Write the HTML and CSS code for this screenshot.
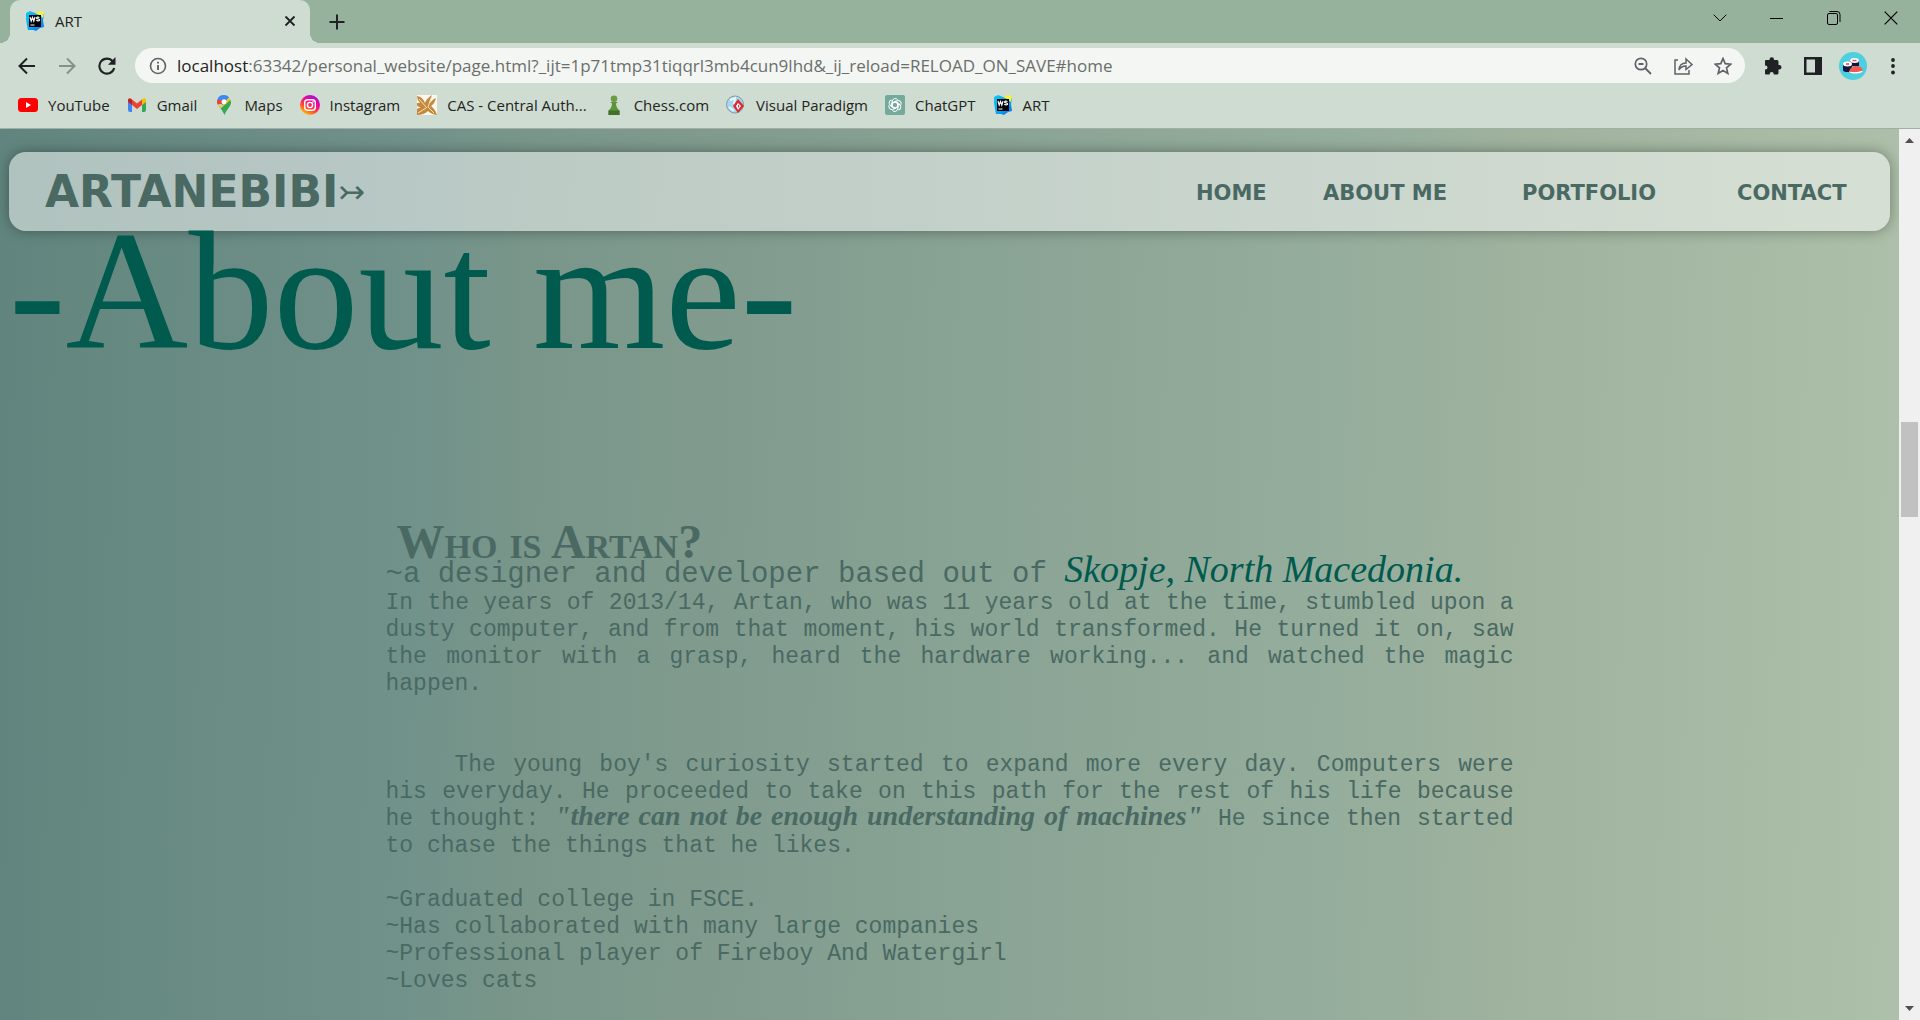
FILE: index.html
```html
<!DOCTYPE html>
<html lang="en">
<head>
<meta charset="utf-8">
<title>ART</title>
<link rel="stylesheet" href="styles.css">
</head>
<body>
<svg class="defs" width="0" height="0" aria-hidden="true">
  <defs>
    <linearGradient id="wsg" x1="0" y1="0" x2="1" y2="1"><stop offset="0" stop-color="#12c8f0"/><stop offset=".5" stop-color="#07a8f5"/><stop offset="1" stop-color="#0c6cf0"/></linearGradient>
    <linearGradient id="ig" x1=".2" y1="1" x2=".8" y2="0"><stop offset="0" stop-color="#ffd000"/><stop offset=".35" stop-color="#ff4a30"/><stop offset=".65" stop-color="#f0069a"/><stop offset="1" stop-color="#9a10ee"/></linearGradient>
    <symbol id="ws" viewBox="0 0 20 20">
      <path d="M1 2 5 0l5 2 5-1 4 2-1 6 1 7-4 1-4 3-3-1-5 0-1-5-1-6z" fill="url(#wsg)"/>
      <path d="M10 2l5-2 4 1-1 6-4-3z" fill="#f2f04a"/>
      <path d="M4 4h12v12H4z" fill="#000"/>
      <path d="M5 6l1.200 4L7.500 6.500 8.800 10 10 6M14.500 6.600c-1.300-.9-3-.4-2.900.5.100 1 3 .7 3 1.800 0 1.100-2 1.300-3.300.4M5.500 14h4" fill="none" stroke="#fff" stroke-width="1.200"/>
    </symbol>
  </defs>
</svg>

<header class="browser">
  <div class="tabstrip">
    <div class="tab">
      <svg width="20" height="20"><use href="#ws"/></svg>
      <span class="tab-title">ART</span>
      <button class="tab-close" aria-label="Close tab"><svg width="12" height="12" viewBox="0 0 12 12"><path d="M1.500 1.500l9 9M10.500 1.500l-9 9" stroke="#202124" stroke-width="1.800"/></svg></button>
    </div>
    <button class="new-tab" aria-label="New tab"><svg width="16" height="16" viewBox="0 0 16 16"><path d="M8 .5v15M.5 8h15" stroke="#202124" stroke-width="2"/></svg></button>
    <div class="window-controls">
      <button aria-label="Search tabs"><svg width="14" height="8" viewBox="0 0 14 8"><path d="M.7.700 7 7l6.300-6.300" fill="none" stroke="#000"/></svg></button>
      <button aria-label="Minimize"><svg width="13" height="13" viewBox="0 0 13 13"><path d="M0 6.500h13" stroke="#000"/></svg></button>
      <button aria-label="Restore"><svg width="14" height="14" viewBox="0 0 14 14" fill="none" stroke="#000"><rect x=".5" y="2.500" width="10" height="11" rx="1.500"/><path d="M2.500.500H10a3 3 0 0 1 3 3V11"/></svg></button>
      <button aria-label="Close"><svg width="14" height="14" viewBox="0 0 14 14"><path d="M.7.700l12.600 12.600M13.300.700.700 13.300" stroke="#000" stroke-width="1.200"/></svg></button>
    </div>
  </div>

  <div class="toolbar">
    <button aria-label="Back"><svg width="18" height="18" viewBox="0 0 18 18"><path d="M17 9H2M9 1.500 1.500 9 9 16.500" fill="none" stroke="#202124" stroke-width="2"/></svg></button>
    <button aria-label="Forward"><svg width="18" height="18" viewBox="0 0 18 18"><path d="M1 9h15M9 1.500 16.500 9 9 16.500" fill="none" stroke="#87908a" stroke-width="2"/></svg></button>
    <button aria-label="Reload"><svg width="18" height="18" viewBox="0 0 18 18"><path d="M14.700 4.300A7.500 7.500 0 1 0 16.200 11" fill="none" stroke="#202124" stroke-width="2.100"/><path d="M17.500 0v7.800H10z" fill="#202124"/></svg></button>
    <div class="omnibox">
      <svg width="18" height="18" viewBox="0 0 18 18"><circle cx="9" cy="9" r="7.500" fill="none" stroke="#5f6368" stroke-width="1.600"/><path d="M9 8v5M9 4.700v1.900" stroke="#5f6368" stroke-width="1.900"/></svg>
      <a class="url" href="#home"><span class="host">localhost</span>:63342/personal_website/page.html?_ijt=1p71tmp31tiqqrl3mb4cun9lhd&amp;_ij_reload=RELOAD_ON_SAVE#home</a>
      <button aria-label="Zoom"><svg width="18" height="18" viewBox="0 0 18 18" fill="none" stroke="#5f6368"><circle cx="7" cy="7" r="5.700" stroke-width="1.700"/><path d="M4.500 7h5M11 11l6 6" stroke-width="1.800"/></svg></button>
      <button aria-label="Share"><svg width="19" height="18" viewBox="0 0 19 18" fill="none" stroke="#5f6368" stroke-width="1.500"><path d="M4 3H1v14h14v-4M5 13c.3-4.500 3-7 7-7V2l6 5.500-6 5V9c-3.500 0-5.500 1.200-7 4z"/></svg></button>
      <button aria-label="Bookmark"><svg width="18" height="18" viewBox="0 0 18 18"><path d="M9 1.500l2.200 5.200 5.600.5-4.300 3.700 1.300 5.500L9 13.500l-4.800 2.900 1.300-5.500-4.300-3.700 5.600-.5z" fill="none" stroke="#5f6368" stroke-width="1.700"/></svg></button>
    </div>
    <button aria-label="Extensions"><svg width="18" height="18" viewBox="0 0 18 18"><path d="M1 4q0-1 1-1h3.500V2.500a2 2 0 0 1 4.500 0V3h3q1.500 0 1.500 1.500V8h.8a2.200 2.200 0 0 1 0 4.400h-.8V16q0 1.500-1.500 1.500h-3.300V17a2 2 0 0 0-4 0v.5H2Q1 17.500 1 16.500v-4h.5a2 2 0 0 0 0-4H1z" fill="#202124"/></svg></button>
    <button aria-label="Side panel"><svg width="18" height="18" viewBox="0 0 18 18"><path d="M0 0h18v18H0zM2.500 2.500v13H11v-13z" fill="#202124" fill-rule="evenodd"/></svg></button>
    <button aria-label="Profile"><svg width="28" height="28" viewBox="0 0 28 28"><circle cx="14" cy="14" r="14" fill="#4dcfe0"/><path d="M11 8v6h9V8z" fill="#101440"/><ellipse cx="15.500" cy="8.500" rx="4.500" ry="2.500" fill="#fff"/><path d="M13.500 8.500h4" stroke="#f05050" stroke-width="1.500"/><path d="M4 12v6q0 2 4.500 2t4.500-2v-6z" fill="#101440"/><ellipse cx="8.500" cy="12" rx="4.500" ry="2.500" fill="#fff"/><path d="M7 12h3" stroke="#e04040" stroke-width="1.500"/><path d="M10 20q1-6 7-6 6 0 7 5-7 2-14 1z" fill="#f4574d"/><path d="M10 19.500q7 2 14-1-1 3-7 3-6 0-7-2z" fill="#fff"/></svg></button>
    <button aria-label="Menu"><svg width="4" height="18" viewBox="0 0 4 18" fill="#202124"><circle cx="2" cy="3" r="1.900"/><circle cx="2" cy="9" r="1.900"/><circle cx="2" cy="15.500" r="1.900"/></svg></button>
  </div>

  <nav class="bookmarks" aria-label="Bookmarks">
    <a href="#"><svg width="20" height="20" viewBox="0 0 20 20"><rect y="3" width="20" height="14" rx="3.500" fill="#f00"/><path d="M8 7l5 3-5 3z" fill="#fff"/></svg>YouTube</a>
    <a href="#"><svg width="20" height="20" viewBox="0 0 20 20"><path d="M1 5v10q0 2 2 2h2V7z" fill="#4285f4"/><path d="M19 5v10q0 2-2 2h-2V7z" fill="#34a853"/><path d="M5 4.500l5 4 5-4V10l-5 4-5-4z" fill="#ea4335"/><path d="M15 4.500q3.500-2.500 4 .5v2l-4 3z" fill="#fbbc04"/><path d="M5 4.500Q1.500 2 1 5v2l4 3z" fill="#c5221f"/></svg>Gmail</a>
    <a href="#"><svg width="20" height="20" viewBox="0 0 20 20"><path d="M3.200 5A7 7 0 0 1 10 0a7 7 0 0 1 5 2L8.500 10z" fill="#4285f4"/><path d="M3.200 5Q2.500 7 3.500 9.500L8 9l1-4z" fill="#ea4335"/><path d="M4 10q1 2 2 3l9.500-10Q17 5 17 8l-7 4z" fill="#fbbc04"/><path d="M6.500 13.500 16.500 5q1.500 4-2 8-3 4-4 7-1.500-4-4-6.500z" fill="#34a853"/><path d="M11 1.300 15 2.500 8 9z" fill="#4285f4"/><circle cx="10" cy="6.800" r="2.500" fill="#fff"/></svg>Maps</a>
    <a href="#"><svg width="20" height="20" viewBox="0 0 20 20"><circle cx="10" cy="10" r="10" fill="url(#ig)"/><g fill="none" stroke="#fff" stroke-width="1.400"><rect x="4.700" y="4.700" width="10.600" height="10.600" rx="3"/><circle cx="10" cy="10" r="2.600"/></g><circle cx="13" cy="7" r=".8" fill="#fff"/></svg>Instagram</a>
    <a href="#"><svg width="20" height="20" viewBox="0 0 20 20"><path d="M0 0h20v20H0z" fill="#fbf6ee"/><path d="M0 1q6 1 8 7Q9 4 15 0q-2 5-2 8 3-4 6-5-1 5-5 8 4 3 6 9-6-1-9-4-4 4-11 4V14l4-2q-4 0-4-2V8h3Q0 5 0 1z" fill="#c48a3c"/><path d="M2 4l8 9M14 3l-3 9 6 6M1 18l8-5" stroke="#f6dfba" fill="none"/></svg>CAS - Central Auth...</a>
    <a href="#"><svg width="20" height="20" viewBox="0 0 20 20"><circle cx="10" cy="3.800" r="3.300" fill="#6a9b41"/><path d="M6 7h8l-2 1.500q0 4 3.500 7V20h-11v-4.500Q8 12.500 8 8.500z" fill="#5d9438"/><path d="M4.500 15.500h11V20h-11z" fill="#42702b"/></svg>Chess.com</a>
    <a href="#"><svg width="20" height="20" viewBox="0 0 20 20"><circle cx="9" cy="9.500" r="8.500" fill="#a5d6ec" stroke="#8499a5"/><path d="M4 5l5-2-1 6M3 12l5 4" stroke="#e8f7fc" stroke-width="2" fill="none"/><path d="M12 4l6 7-6 7-5-7z" fill="#d92b32"/><path d="M12 8l3 3-3 4-2-4z" fill="#fff"/><path d="M12 9.500l1.500 1.500-1.500 2z" fill="#d92b32"/></svg>Visual Paradigm</a>
    <a href="#"><svg width="20" height="20" viewBox="0 0 20 20"><rect width="20" height="20" rx="2" fill="#75a99c"/><g fill="none" stroke="#fff" stroke-width="1"><path id="petal" d="M7.300 12.500V6.400a3 3 0 0 1 5.400-1.700M7.300 8.200 10 6.600l4.500 2.600"/><use href="#petal" transform="rotate(60 10 10)"/><use href="#petal" transform="rotate(120 10 10)"/><use href="#petal" transform="rotate(180 10 10)"/><use href="#petal" transform="rotate(240 10 10)"/><use href="#petal" transform="rotate(300 10 10)"/></g></svg>ChatGPT</a>
    <a href="#"><svg width="20" height="20"><use href="#ws"/></svg>ART</a>
  </nav>
</header>

<div class="viewport">
  <main class="page">
    <nav class="navbar">
      <a class="logo" href="#home">ARTANEBIBI<span class="logo-arrow">↣</span></a>
      <div class="links">
        <a href="#home">HOME</a>
        <a href="#about">ABOUT ME</a>
        <a href="#portfolio">PORTFOLIO</a>
        <a href="#contact">CONTACT</a>
      </div>
    </nav>

    <h1 class="title">-About me-</h1>

    <section class="about">
      <h2 class="question">Who is Artan?</h2>
      <p class="lead">~a designer and developer based out of <em class="place">Skopje, North Macedonia.</em></p>
      <p class="story">In the years of 2013/14, Artan, who was 11 years old at the time, stumbled upon a dusty computer, and from that moment, his world transformed. He turned it on, saw the monitor with a grasp, heard the hardware working... and watched the magic happen.</p>
      <p class="story second">The young boy's curiosity started to expand more every day. Computers were his everyday. He proceeded to take on this path for the rest of his life because he thought: <strong class="quote">"there can not be enough understanding of machines"</strong> He since then started to chase the things that he likes.</p>
      <ul class="facts">
        <li>~Graduated college in FSCE.</li>
        <li>~Has collaborated with many large companies</li>
        <li>~Professional player of Fireboy And Watergirl</li>
        <li>~Loves cats</li>
      </ul>
    </section>
  </main>

  <div class="scrollbar" aria-hidden="true">
    <svg width="9" height="5" viewBox="0 0 9 5"><path d="M0 5 4.500 0 9 5z" fill="#505050"/></svg>
    <div class="track"><div class="thumb"></div></div>
    <svg width="9" height="5" viewBox="0 0 9 5"><path d="M0 0l4.500 5L9 0z" fill="#505050"/></svg>
  </div>
</div>
</body>
</html>
```

FILE: styles.css
```css
* { box-sizing: border-box; }

body {
  margin: 0;
  height: 100vh;
  display: flex;
  flex-direction: column;
  overflow: hidden;
  font-family: "Open Sans", "Noto Sans", sans-serif;
  color: #1f2421;
}

.defs { position: absolute; }
a { color: inherit; text-decoration: none; }
button {
  display: flex;
  align-items: center;
  justify-content: center;
  padding: 0;
  border: 0;
  background: none;
}
svg { display: block; flex: none; }

/* Browser frame */
.browser {
  flex: none;
  background: #cfdcd2;
  border-bottom: 1px solid #a3aea7;
}
.tabstrip {
  display: flex;
  height: 43px;
  padding-left: 10px;
  background: #96b29d;
}
.tab {
  position: relative;
  display: flex;
  align-items: center;
  width: 300px;
  padding: 0 12px 1px 15px;
  border-radius: 10px 10px 0 0;
  background: #cfdcd2;
  font-size: 15px;
}
.tab::before,
.tab::after {
  content: "";
  position: absolute;
  bottom: 0;
  width: 10px;
  height: 10px;
}
.tab::before { right: 100%; background: radial-gradient(circle at 0 0, #96b29d 10px, #cfdcd2 10px); }
.tab::after { left: 100%; background: radial-gradient(circle at 100% 0, #96b29d 10px, #cfdcd2 10px); }
.tab-title { flex: 1; margin-left: 10px; }
.tab-close { width: 16px; height: 16px; }
.new-tab { width: 54px; }
.window-controls { display: flex; height: 36px; margin-left: auto; padding-right: 1px; }
.window-controls button { width: 57px; }

.toolbar {
  display: flex;
  align-items: center;
  height: 45px;
  padding: 0 7px;
}
.toolbar > button { width: 40px; height: 40px; }
.omnibox {
  flex: 1;
  display: flex;
  align-items: center;
  height: 35px;
  margin: 0 8px;
  padding: 0 2px 0 14px;
  border-radius: 18px;
  background: #f4f6f3;
}
.omnibox button { width: 40px; height: 32px; }
.url { flex: 1; margin-left: 10px; font-size: 17px; color: #6a6f6c; white-space: nowrap; }
.host { color: #1f2421; }

.bookmarks {
  display: flex;
  align-items: center;
  gap: 17px;
  height: 40px;
  padding: 0 18px 6px;
  font-size: 15px;
}
.bookmarks a { display: flex; align-items: center; gap: 10px; white-space: nowrap; }

/* Page area */
.viewport { flex: 1; display: flex; min-height: 0; }
.page {
  flex: 1;
  min-width: 0;
  overflow: hidden;
  padding: 23px 9px 0;
  background: linear-gradient(91deg, #61857e 0%, #71928a 22%, #7a968a 28%, #95ad9c 70%, #9eb29e 79%, #adc0a9 100%);
  color: #4a6963;
}
.navbar {
  display: flex;
  align-items: center;
  justify-content: space-between;
  height: 79px;
  padding: 0 32px 0 36px;
  border-radius: 17px;
  background: rgba(255, 255, 255, .5);
  box-shadow: 0 0 14px rgba(0, 0, 0, .35);
  font-family: "DejaVu Sans", sans-serif;
  font-weight: bold;
}
.logo { display: flex; align-items: center; font-size: 44px; line-height: 48px; }
.logo-arrow { font-size: 32px; font-weight: normal; }
.links {
  display: grid;
  grid-template-columns: 64px 136px 152px 121px;
  gap: 63px;
  padding-top: 3px;
  font-size: 21px;
  white-space: nowrap;
}

.title {
  margin: 0;
  font: 170px/120px "Liberation Serif", serif;
  color: #005a4d;
}

.about {
  max-width: 1128px;
  margin: 176px auto 0;
  font: 23px/27px "Liberation Mono", monospace;
}
.question {
  margin: 0;
  padding-left: 11px;
  font: bold 48px/30px "Liberation Serif", serif;
  font-variant: small-caps;
  padding-bottom: 2px;
}
.lead { margin: 0; font-size: 29px; line-height: 30px; }
.place {
  font: italic 38px/20px "Liberation Serif", serif;
  color: #005a4d;
}
.story { margin: 0 0 54px; text-align: justify; }
.second { margin-bottom: 27px; text-indent: 69px; }
.quote { font: italic bold 28px/20px "Liberation Serif", serif; }
.facts { margin: 0; padding: 0; list-style: none; }

.scrollbar {
  flex: none;
  display: flex;
  flex-direction: column;
  align-items: center;
  width: 21px;
  padding: 9px 0;
  background: #f0f0f0;
}
.track { flex: 1; width: 17px; padding-top: 279px; }
.thumb { height: 95px; background: #c1c1c1; }
```
